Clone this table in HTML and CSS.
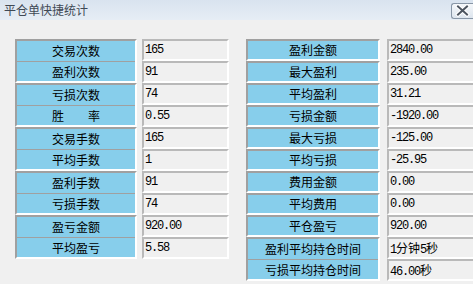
FILE: index.html
```html
<!DOCTYPE html>
<html>
<head>
<meta charset="utf-8">
<link rel="stylesheet" href="styles.css">
</head>
<body>
<div class="titlebar">
  <span class="title">平仓单快捷统计</span>
  <div class="close">
    <svg width="21" height="15" viewBox="0 0 21 15">
      <path d="M6 3.5 L15 11.5 M15 3.5 L6 11.5" stroke="#ffffff" stroke-width="4" stroke-linecap="square"/>
      <path d="M6 3.5 L15 11.5 M15 3.5 L6 11.5" stroke="#4d5560" stroke-width="2" stroke-linecap="square"/>
    </svg>
  </div>
</div>
<div class="content">
  <div class="section left">
    <div class="labels">
      <div class="group"><div class="lab first">交易次数</div><div class="lab second">盈利次数</div></div>
      <div class="group"><div class="lab first">亏损次数</div><div class="lab second">胜　　率</div></div>
      <div class="group"><div class="lab first">交易手数</div><div class="lab second">平均手数</div></div>
      <div class="group"><div class="lab first">盈利手数</div><div class="lab second">亏损手数</div></div>
      <div class="group"><div class="lab first">盈亏金额</div><div class="lab second">平均盈亏</div></div>
    </div>
    <div class="values">
      <div class="val">165</div>
      <div class="val">91</div>
      <div class="val">74</div>
      <div class="val">0.55</div>
      <div class="val">165</div>
      <div class="val">1</div>
      <div class="val">91</div>
      <div class="val">74</div>
      <div class="val">920.00</div>
      <div class="val">5.58</div>
    </div>
  </div>
  <div class="section right">
    <div class="labels wide">
      <div class="group"><div class="lab single">盈利金额</div></div>
      <div class="group"><div class="lab single">最大盈利</div></div>
      <div class="group"><div class="lab single">平均盈利</div></div>
      <div class="group"><div class="lab single">亏损金额</div></div>
      <div class="group"><div class="lab single">最大亏损</div></div>
      <div class="group"><div class="lab single">平均亏损</div></div>
      <div class="group"><div class="lab single">费用金额</div></div>
      <div class="group"><div class="lab single">平均费用</div></div>
      <div class="group"><div class="lab single">平仓盈亏</div></div>
      <div class="group"><div class="lab first">盈利平均持仓时间</div><div class="lab second">亏损平均持仓时间</div></div>
    </div>
    <div class="values">
      <div class="val">2840.00</div>
      <div class="val">235.00</div>
      <div class="val">31.21</div>
      <div class="val">-1920.00</div>
      <div class="val">-125.00</div>
      <div class="val">-25.95</div>
      <div class="val">0.00</div>
      <div class="val">0.00</div>
      <div class="val">920.00</div>
      <div class="val">1<span class="cjk">分钟</span>5<span class="cjk">秒</span></div>
      <div class="val">46.00<span class="cjk">秒</span></div>
    </div>
  </div>
</div>
</body>
</html>
```
FILE: styles.css
```css
html, body {
  margin: 0;
  padding: 0;
}
body {
  width: 473px;
  height: 284px;
  overflow: hidden;
  background: #f0f0f0;
  font-family: "Noto Sans CJK SC", sans-serif;
}
.titlebar {
  height: 20px;
  background: linear-gradient(#d9e3ef, #e6edf5);
  display: flex;
  align-items: center;
  justify-content: space-between;
  padding-left: 4px;
}
.title {
  font-size: 12px;
  line-height: 20px;
  color: #3f4955;
}
.close {
  width: 21px;
  height: 14px;
  margin-top: 1px;
  border: 1px solid #8896a6;
  border-right: none;
  border-radius: 3px 0 0 3px;
  background: linear-gradient(#f4f7fa, #dde5ee);
  display: flex;
  align-items: center;
  justify-content: center;
  box-sizing: content-box;
}
.close svg {
  display: block;
}
.content {
  display: flex;
  padding: 19px 0 0 15px;
}
.section {
  display: flex;
  align-items: flex-start;
}
.left {
  column-gap: 5px;
}
.right {
  margin-left: 17px;
  column-gap: 7px;
}
.labels {
  width: 122px;
  display: flex;
  flex-direction: column;
}
.labels.wide {
  width: 134px;
}
.group {
  border-top: 2px solid #a0a0a0;
  border-left: 2px solid #a0a0a0;
  border-right: 2px solid #ffffff;
  border-bottom: 2px solid #ffffff;
  background: #87ceeb;
}
.lab {
  text-align: center;
  font-size: 12px;
  color: #000;
}
.lab.first {
  height: 20px;
  line-height: 20px;
}
.lab.second {
  height: 19px;
  line-height: 19px;
  border-top: 1px solid #a0a0a0;
}
.lab.single {
  height: 18px;
  line-height: 18px;
}
.values {
  width: 87px;
  display: flex;
  flex-direction: column;
}
.right .values {
  width: 90px;
}
.val {
  height: 18px;
  line-height: 18px;
  border-top: 2px solid #b9b9b9;
  border-left: 2px solid #b9b9b9;
  border-right: 2px solid #ffffff;
  border-bottom: 2px solid #ffffff;
  background: #f0f0f0;
  padding-left: 1px;
  font-family: "Liberation Mono", "Noto Sans CJK SC", monospace;
  font-size: 12px;
  letter-spacing: -1.2px;
  color: #000;
  white-space: nowrap;
}
.cjk {
  font-family: "Noto Sans CJK SC", sans-serif;
  letter-spacing: 0;
}
```
